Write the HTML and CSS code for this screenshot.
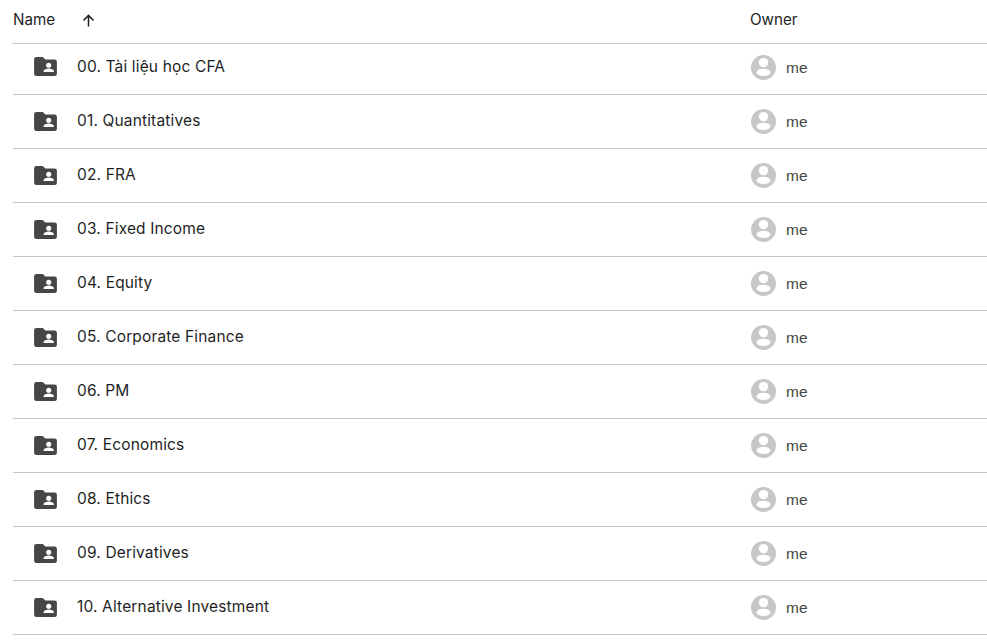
FILE: index.html
```html
<!DOCTYPE html>
<html lang="vi">
<head>
<meta charset="utf-8">
<title>Drive</title>
<link rel="stylesheet" href="styles.css">
</head>
<body>
<svg class="defs" width="0" height="0" aria-hidden="true">
  <symbol id="folder" viewBox="0 0 24 20">
    <path fill="#444746" d="M2.4 0h6.8l2.6 2.7h9.8A2.4 2.4 0 0 1 24 5.1v12.5a2.4 2.4 0 0 1-2.4 2.4H2.4A2.4 2.4 0 0 1 0 17.6V2.4A2.4 2.4 0 0 1 2.4 0z"/>
    <circle fill="#fff" cx="15.4" cy="8.7" r="2.7"/>
    <path fill="#fff" d="M10 15.9v-.9c0-1.9 3.6-2.9 5.4-2.9s5.4 1 5.4 2.9v.9z"/>
  </symbol>
  <symbol id="avatar" viewBox="0 0 25 25">
    <circle fill="#c7c7c7" cx="12.5" cy="12.5" r="12.5"/>
    <circle fill="#fff" cx="12.5" cy="7.6" r="4.7"/>
    <ellipse fill="#fff" cx="12.5" cy="17.4" rx="7" ry="3.7"/>
  </symbol>
</svg>
<main class="list">
  <header class="head">
    <div class="col-name">
      <span class="head-label">Name</span>
      <svg class="sort" viewBox="0 0 14 14" aria-hidden="true"><path fill="none" stroke="#1f1f1f" stroke-width="1.6" d="M7 13.5V1.5M1.6 6.9 7 1.5l5.4 5.4"/></svg>
    </div>
    <div class="col-owner head-label">Owner</div>
  </header>
  <div class="row first"><div class="cell"><svg class="folder"><use href="#folder"/></svg><span class="title">00. Tài liệu học CFA</span></div><div class="owner"><svg class="avatar"><use href="#avatar"/></svg><span class="me">me</span></div></div>
  <div class="row"><div class="cell"><svg class="folder"><use href="#folder"/></svg><span class="title">01. Quantitatives</span></div><div class="owner"><svg class="avatar"><use href="#avatar"/></svg><span class="me">me</span></div></div>
  <div class="row"><div class="cell"><svg class="folder"><use href="#folder"/></svg><span class="title">02. FRA</span></div><div class="owner"><svg class="avatar"><use href="#avatar"/></svg><span class="me">me</span></div></div>
  <div class="row"><div class="cell"><svg class="folder"><use href="#folder"/></svg><span class="title">03. Fixed Income</span></div><div class="owner"><svg class="avatar"><use href="#avatar"/></svg><span class="me">me</span></div></div>
  <div class="row"><div class="cell"><svg class="folder"><use href="#folder"/></svg><span class="title">04. Equity</span></div><div class="owner"><svg class="avatar"><use href="#avatar"/></svg><span class="me">me</span></div></div>
  <div class="row"><div class="cell"><svg class="folder"><use href="#folder"/></svg><span class="title">05. Corporate Finance</span></div><div class="owner"><svg class="avatar"><use href="#avatar"/></svg><span class="me">me</span></div></div>
  <div class="row"><div class="cell"><svg class="folder"><use href="#folder"/></svg><span class="title">06. PM</span></div><div class="owner"><svg class="avatar"><use href="#avatar"/></svg><span class="me">me</span></div></div>
  <div class="row"><div class="cell"><svg class="folder"><use href="#folder"/></svg><span class="title">07. Economics</span></div><div class="owner"><svg class="avatar"><use href="#avatar"/></svg><span class="me">me</span></div></div>
  <div class="row"><div class="cell"><svg class="folder"><use href="#folder"/></svg><span class="title">08. Ethics</span></div><div class="owner"><svg class="avatar"><use href="#avatar"/></svg><span class="me">me</span></div></div>
  <div class="row"><div class="cell"><svg class="folder"><use href="#folder"/></svg><span class="title">09. Derivatives</span></div><div class="owner"><svg class="avatar"><use href="#avatar"/></svg><span class="me">me</span></div></div>
  <div class="row"><div class="cell"><svg class="folder"><use href="#folder"/></svg><span class="title">10. Alternative Investment</span></div><div class="owner"><svg class="avatar"><use href="#avatar"/></svg><span class="me">me</span></div></div>
</main>
</body>
</html>
```
FILE: styles.css
```css
html, body {
  margin: 0;
  padding: 0;
  background: #fff;
  overflow: hidden;
}
body {
  font-family: Inter, Roboto, "Liberation Sans", sans-serif;
  color: #1f1f1f;
}
.defs {
  position: absolute;
}
.list {
  display: flex;
  flex-direction: column;
  padding-left: 13px;
}
.head {
  display: flex;
  align-items: center;
  height: 43px;
  margin-left: -1px;
  padding-left: 1px;
  border-bottom: 1px solid #c7c7c7;
}
.col-name {
  display: flex;
  align-items: center;
  gap: 27px;
  width: 737px;
  margin-top: -3px;
}
.col-owner {
  margin-top: -3px;
}
.head-label {
  font-size: 15.2px;
  line-height: 20px;
}
.sort {
  width: 13px;
  height: 13px;
}
.row {
  display: flex;
  align-items: center;
  height: 53px;
  border-bottom: 1px solid #c7c7c7;
}
.row.first {
  height: 46px;
  padding-bottom: 4px;
}
.cell {
  display: flex;
  align-items: center;
  width: 737px;
  padding-left: 21px;
  box-sizing: border-box;
  margin-top: -1px;
}
.folder {
  width: 23px;
  height: 19px;
  flex: none;
}
.title {
  margin-left: 20px;
  font-size: 15.5px;
  line-height: 20px;
  letter-spacing: 0.15px;
  font-weight: 400;
}
.owner {
  display: flex;
  align-items: center;
  gap: 10px;
  padding-left: 1px;
}
.avatar {
  width: 25px;
  height: 25px;
  flex: none;
}
.me {
  font-family: "Liberation Sans", Arial, sans-serif;
  font-size: 15.5px;
  line-height: 20px;
  color: #444746;
  margin-top: 1px;
}
```
